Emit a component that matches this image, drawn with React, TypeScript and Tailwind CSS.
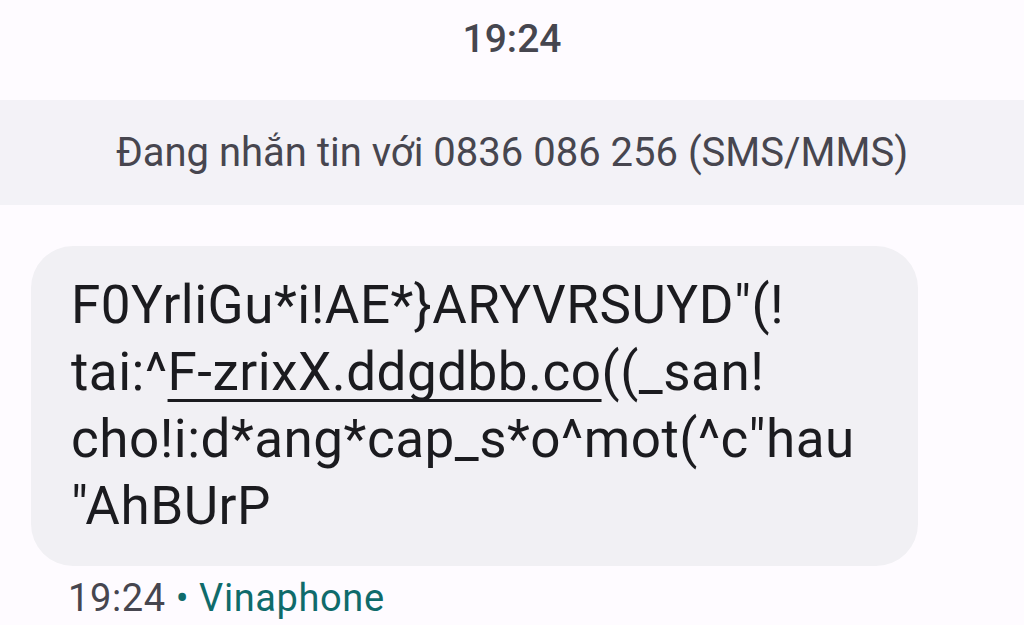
export default function App() {
  return (
    <div className="w-[1024px] h-[625px] overflow-hidden bg-[#fefbff] font-['Roboto','Noto_Sans',sans-serif]">
      <div className="h-[100px] pt-[15px] text-center text-[39px] leading-[48px] font-medium text-[#46464f]">
        19:24
      </div>
      <div className="h-[105px] bg-[#f3f2f7] flex items-center justify-center text-[40px] leading-[48px] text-[#47464f]">
        Đang nhắn tin với 0836 086 256 (SMS/MMS)
      </div>
      <div className="pt-[41px] pl-[31px]">
        <div className="w-[887px] rounded-[42px] bg-[#f1f0f4] pl-[40px] pr-[20px] py-[26px] text-[53px] leading-[67px] tracking-[0.5px] text-[#1b1b1f] whitespace-nowrap">
          <div>F0YrliGu*i!AE*{"}"}ARYVRSUYD"(!</div>
          <div>
            tai:^
            <span className="underline decoration-[3px] underline-offset-[9px] [text-decoration-skip-ink:none]">
              F-zrixX.ddgdbb.co
            </span>
            ((_san!
          </div>
          <div>cho!i:d*ang*cap_s*o^mot(^c"hau</div>
          <div>"AhBUrP</div>
        </div>
        <div className="mt-[10px] pl-[37px] text-[38px] leading-[45px] tracking-[0.6px] text-[#46464f]">
          19:24 <span className="text-[#0f6b6b]">• Vinaphone</span>
        </div>
      </div>
    </div>
  );
}
